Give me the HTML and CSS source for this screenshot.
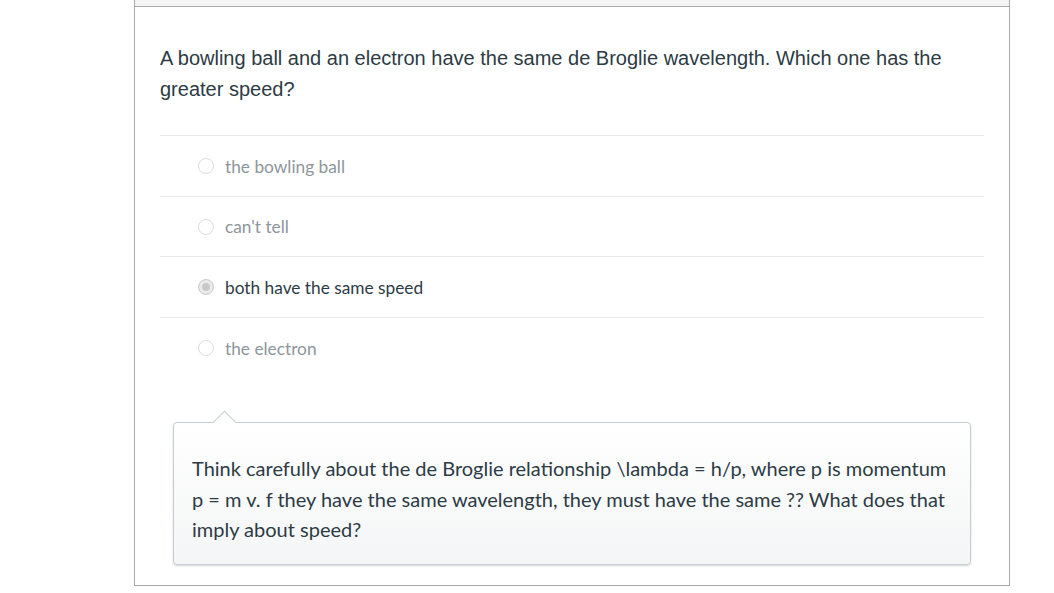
FILE: index.html
```html
<!DOCTYPE html>
<html>
<head>
<meta charset="utf-8">
<link rel="stylesheet" href="styles.css">
</head>
<body>
<div class="panel">
  <div class="panel-head"></div>
  <div class="panel-body">
    <div class="question">A bowling ball and an electron have the same de Broglie wavelength. Which one has the greater speed?</div>
    <div class="answers">
      <div class="answer"><span class="radio"></span><span class="label">the bowling ball</span></div>
      <div class="answer short"><span class="radio"></span><span class="label">can't tell</span></div>
      <div class="answer selected"><span class="radio"></span><span class="label">both have the same speed</span></div>
      <div class="answer last"><span class="radio"></span><span class="label">the electron</span></div>
    </div>
    <div class="feedback">
      <p>Think carefully about the de Broglie relationship \lambda = h/p, where p is momentum p = m v. f they have the same wavelength, they must have the same ?? What does that imply about speed?</p>
    </div>
  </div>
</div>
</body>
</html>
```
FILE: styles.css
```css
html, body {
  margin: 0;
  padding: 0;
  background: #fff;
}
.panel {
  margin-left: 134px;
  width: 874px;
  border: 1px solid #aaaaaa;
  border-top: none;
}
.panel-head {
  height: 6px;
  background: #f4f4f4;
  border-bottom: 1px solid #aaaaaa;
}
.panel-body {
  padding: 36px 25px 20px 25px;
}
.question {
  font-family: "Liberation Sans", Arial, sans-serif;
  font-size: 20px;
  line-height: 31px;
  color: #2d3b45;
  padding-right: 20px;
  margin-bottom: 30px;
}
.answers {
  font-family: Lato, "Noto Sans", sans-serif;
  font-size: 17.3px;
}
.answer {
  display: flex;
  align-items: center;
  height: 60px;
  border-top: 1px solid #e8e8e8;
  padding-left: 38px;
  color: #8e969c;
}
.answer.short {
  height: 59px;
}
.answer.selected {
  color: #2d3b45;
}
.radio {
  width: 14px;
  height: 14px;
  border-radius: 50%;
  border: 1px solid #dcdcdc;
  background: #fff;
  margin-right: 11px;
  flex: none;
}
.answer.selected .radio {
  border-color: #cfcfcf;
  background: #c9c9c9;
  box-shadow: inset 0 0 0 3px #ececec;
}
.feedback {
  position: relative;
  margin: 44px 13px 0 13px;
  border: 1px solid #c7cdd1;
  border-radius: 4px;
  background: linear-gradient(#ffffff, #f4f5f6);
  box-shadow: 0 1px 2px rgba(0, 0, 0, 0.18);
  padding: 30px 12px 19px 18px;
}
.feedback::before {
  content: "";
  position: absolute;
  top: -9px;
  left: 42px;
  width: 16px;
  height: 16px;
  background: #fff;
  border-top: 1px solid #c7cdd1;
  border-left: 1px solid #c7cdd1;
  transform: rotate(45deg);
}
.feedback p {
  margin: 0;
  font-family: Lato, "Noto Sans", sans-serif;
  font-size: 20px;
  line-height: 30.5px;
  color: #2d3b45;
}
```
